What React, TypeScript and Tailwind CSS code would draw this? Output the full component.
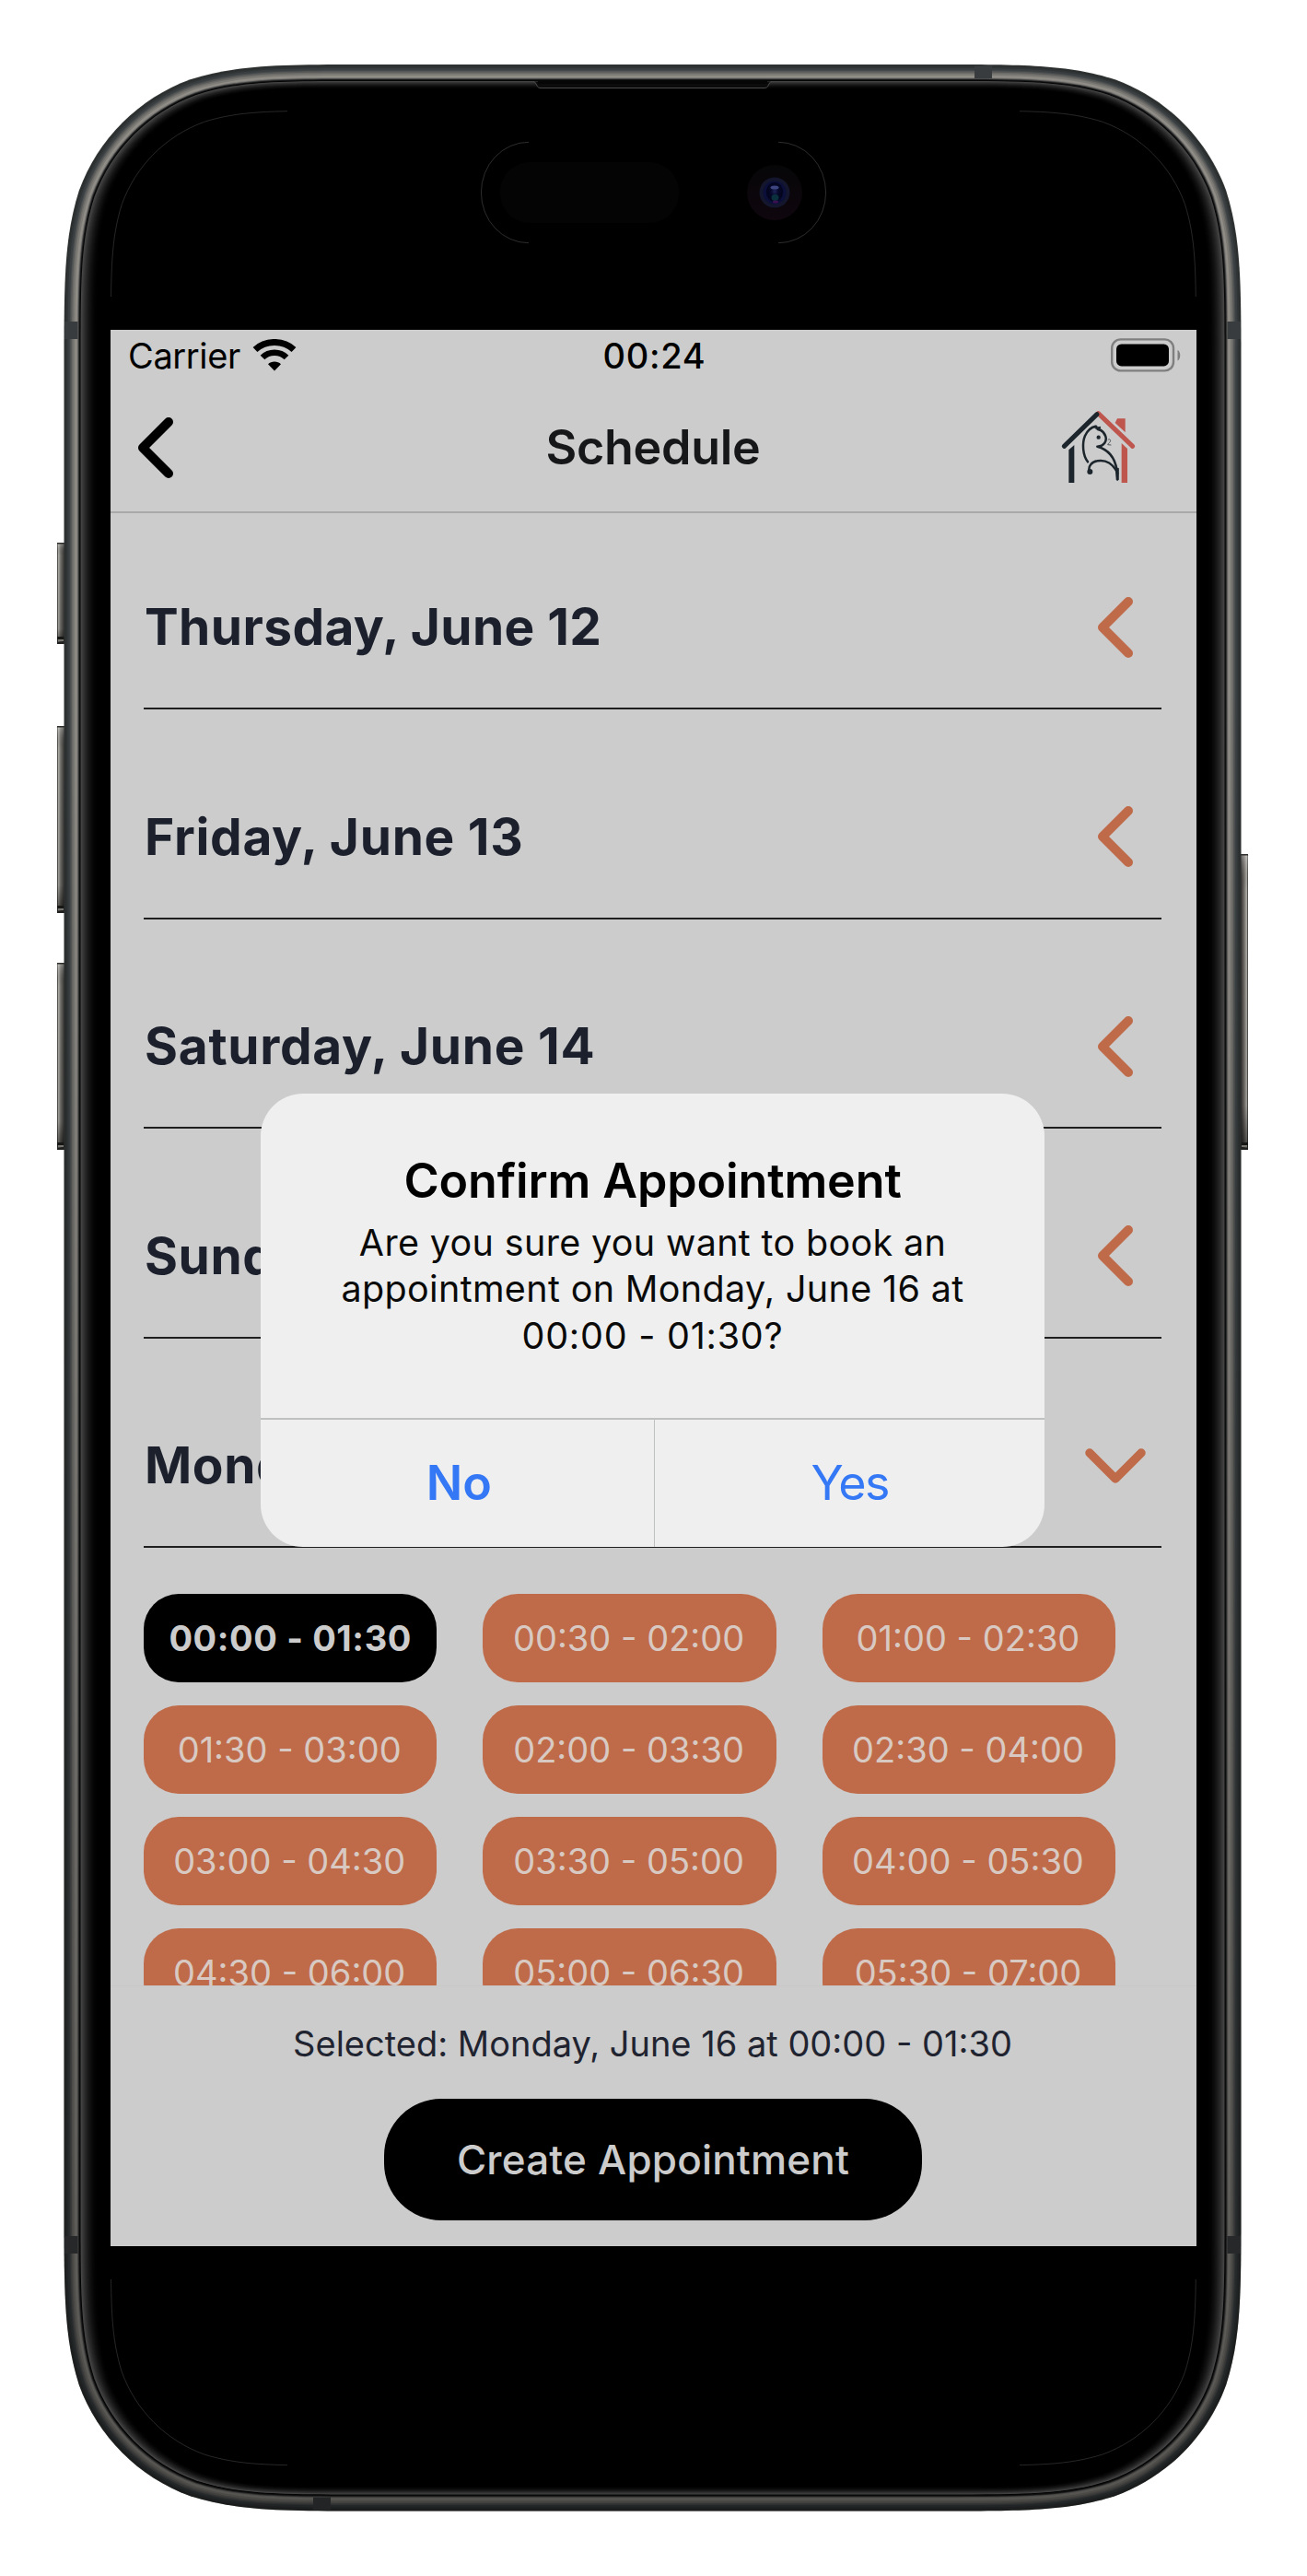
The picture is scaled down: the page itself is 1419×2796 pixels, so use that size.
import React from "react";

type Stop = [number, string];

/** Continuous-curvature rounded rectangle, as used for device outlines. */
function squircle(x: number, y: number, w: number, h: number, r: number): string {
  const k = [1.52866483, 1.08849299, 0.86840701, 0.63149399, 0.37282392, 0.16906, 0.07491176].map((n) => n * r);
  const [a, b, c, d, e, f, g] = k;
  const R = x + w;
  const B = y + h;
  return [
    `M${x + a} ${y}`,
    `L${R - a} ${y}`,
    `C${R - b} ${y} ${R - c} ${y} ${R - d} ${y + g}`,
    `C${R - e} ${y + f} ${R - f} ${y + e} ${R - g} ${y + d}`,
    `C${R} ${y + c} ${R} ${y + b} ${R} ${y + a}`,
    `L${R} ${B - a}`,
    `C${R} ${B - b} ${R} ${B - c} ${R - g} ${B - d}`,
    `C${R - f} ${B - e} ${R - e} ${B - f} ${R - d} ${B - g}`,
    `C${R - c} ${B} ${R - b} ${B} ${R - a} ${B}`,
    `L${x + a} ${B}`,
    `C${x + b} ${B} ${x + c} ${B} ${x + d} ${B - g}`,
    `C${x + e} ${B - f} ${x + f} ${B - e} ${x + g} ${B - d}`,
    `C${x} ${B - c} ${x} ${B - b} ${x} ${B - a}`,
    `L${x} ${y + a}`,
    `C${x} ${y + b} ${x} ${y + c} ${x + g} ${y + d}`,
    `C${x + f} ${y + e} ${x + e} ${y + f} ${x + d} ${y + g}`,
    `C${x + c} ${y} ${x + b} ${y} ${x + a} ${y}Z`,
  ].join(" ");
}

const OUTER = { x: 69.5, y: 70, w: 1278, h: 2655.5, r: 217 };

const METAL: Stop[] = [
  [0, "#333736"],
  [1, "#2a2d2d"],
  [2, "#303435"],
  [4, "#393e40"],
  [6, "#44484a"],
  [7, "#565857"],
  [8.5, "#6b6a67"],
  [10, "#7d7b76"],
  [12, "#908d87"],
  [14, "#7f7d79"],
  [15, "#4a4a4a"],
  [16, "#191a1b"],
  [17, "#050505"],
];

const GLOW = ["#464646", "#3f3f3f", "#393939", "#323232", "#2c2c2c", "#272727", "#222222", "#1d1d1d", "#181818", "#141414", "#101010", "#0d0d0d", "#0a0a0a", "#070707", "#050505", "#030303", "#020202", "#000000"];

function inset(dx: number, dy: number) {
  return squircle(OUTER.x + dx, OUTER.y + dy, OUTER.w - 2 * dx, OUTER.h - 2 * dy, OUTER.r - (dx + dy) / 2);
}

const LEFT_BUTTONS = [
  { y: 589, h: 110 },
  { y: 788, h: 203 },
  { y: 1045, h: 203 },
];

const BANDS = [
  { x: 70.5, y: 349, w: 14, h: 19 },
  { x: 1332.5, y: 349, w: 14.5, h: 19 },
  { x: 70.5, y: 2427, w: 14, h: 19 },
  { x: 1332.5, y: 2427, w: 14.5, h: 19 },
  { x: 1058, y: 71.5, w: 19, h: 13.5 },
  { x: 340, y: 2710.5, w: 19, h: 13.5 },
];

function SideButton({ x, y, h, flip }: { x: number; y: number; h: number; flip?: boolean }) {
  return (
    <g>
      <rect x={x} y={y} width={8} height={h} rx={1.2} fill={flip ? "url(#btnR)" : "url(#btnL)"} />
      <rect x={x} y={y} width={8} height={h} rx={1.2} fill="url(#btnV)" />
      <rect x={x} y={y} width={8} height={1.5} fill="#2c2c2a" />
      <rect x={x} y={y + h - 8} width={8} height={3} fill="#171716" />
      <rect x={x + 1} y={y + h - 5} width={6} height={2} fill="#77756f" />
      <rect x={x} y={y + h - 2} width={8} height={2} fill="#20201f" />
    </g>
  );
}

function PhoneFrame() {
  return (
    <svg className="absolute inset-0" width="1419" height="2796" viewBox="0 0 1419 2796" aria-hidden="true">
      <defs>
        <linearGradient id="btnL" x1="0" x2="1" y1="0" y2="0">
          <stop offset="0" stopColor="#2b2b29" />
          <stop offset="0.2" stopColor="#b0aea8" />
          <stop offset="0.45" stopColor="#75736e" />
          <stop offset="1" stopColor="#33322f" />
        </linearGradient>
        <linearGradient id="btnR" x1="1" x2="0" y1="0" y2="0">
          <stop offset="0" stopColor="#2b2b29" />
          <stop offset="0.2" stopColor="#b0aea8" />
          <stop offset="0.5" stopColor="#75716d" />
          <stop offset="1" stopColor="#2f2d2b" />
        </linearGradient>
        <linearGradient id="btnV" x1="0" x2="0" y1="0" y2="1">
          <stop offset="0" stopColor="#fff" stopOpacity="0.3" />
          <stop offset="0.12" stopColor="#000" stopOpacity="0" />
          <stop offset="0.85" stopColor="#000" stopOpacity="0.1" />
          <stop offset="1" stopColor="#000" stopOpacity="0.6" />
        </linearGradient>
        <linearGradient id="shade" x1="0" x2="0" y1="0" y2="1">
          <stop offset="0.25" stopColor="#000" stopOpacity="0" />
          <stop offset="0.8" stopColor="#000" stopOpacity="0.28" />
          <stop offset="1" stopColor="#000" stopOpacity="0.4" />
        </linearGradient>
        <radialGradient id="lens" cx="0.5" cy="0.42" r="0.55">
          <stop offset="0" stopColor="#1d2458" />
          <stop offset="0.4" stopColor="#060829" />
          <stop offset="0.8" stopColor="#03041c" />
          <stop offset="1" stopColor="#0c103c" />
        </radialGradient>
        <linearGradient id="lensRing" x1="0" x2="0" y1="0" y2="1">
          <stop offset="0" stopColor="#060607" />
          <stop offset="1" stopColor="#0f060e" />
        </linearGradient>
        <clipPath id="corners">
          <path d="M118 118H312V322H118Z M1107 118H1301V322H1107Z M118 2474H312V2678H118Z M1107 2474H1301V2678H1107Z" />
        </clipPath>
      </defs>

      {LEFT_BUTTONS.map((b) => (
        <SideButton key={b.y} x={62} y={b.y} h={b.h} />
      ))}
      <SideButton x={1347} y={927} h={321} flip />

      {METAL.map(([d, color]) => (
        <path key={d} d={inset(d, d)} fill={color} />
      ))}
      {BANDS.map((b) => (
        <rect key={`${b.x}-${b.y}`} x={b.x} y={b.y} width={b.w} height={b.h} fill="#393c3f" />
      ))}
      <path d={inset(0, 0)} fill="url(#shade)" />
      {GLOW.map((color, i) => (
        <path key={color} d={inset(18 + i, 18 + i * 0.5)} fill={color} />
      ))}

      <path
        d="M579 88.5 Q581 88.5 582 91 L583.5 94 Q584.5 95.5 587 95.5 L830 95.5 Q832.5 95.5 833.5 94 L835 91 Q836 88.5 838 88.5"
        fill="#0b0b0b"
        stroke="#4a4a4a"
        strokeWidth="1"
      />
      <rect x="584" y="87" width="249" height="4" fill="#060606" />

      <g fill="none" stroke="#4b4b4b" strokeWidth="0.6">
        <path d="M574 154.3 A51.6 54.7 0 0 0 574 263.7" />
        <path d="M845 154.3 A51.6 54.7 0 0 1 845 263.7" />
      </g>
      <rect x="543" y="176" width="194" height="66" rx="32" fill="#040404" />
      <circle cx="841" cy="209" r="30" fill="url(#lensRing)" />
      <circle cx="841" cy="209" r="16.5" fill="#13162c" />
      <circle cx="841" cy="209" r="12.5" fill="#0b0f3a" />
      <ellipse cx="841" cy="209.5" rx="9.5" ry="11.5" fill="url(#lens)" />
      <ellipse cx="841" cy="203.5" rx="4.5" ry="2" fill="#3d4480" />
      <ellipse cx="841.5" cy="214.5" rx="4" ry="3.5" fill="#0b303d" />
      <ellipse cx="842" cy="219" rx="3" ry="1.5" fill="#3c1050" />

      <path d={squircle(120.4, 120.4, 1178, 2555.5, 160)} fill="none" stroke="#474747" strokeWidth="0.55" clipPath="url(#corners)" />
    </svg>
  );
}

function WifiIcon() {
  return (
    <svg width="48" height="36" viewBox="0 0 48 36" fill="none" stroke="#000">
      <path d="M3 11.5 C14.5 0.8 33.5 0.8 45 11.5" strokeWidth="7" />
      <path d="M11 20 C18 13 30 13 37 20" strokeWidth="6.6" />
      <path d="M24 34.5 L17 27.2 C20.5 23.6 27.5 23.6 31 27.2 Z" fill="#000" stroke="none" />
    </svg>
  );
}

function BatteryIcon() {
  return (
    <svg width="76" height="37" viewBox="0 0 76 37">
      <rect x="1.2" y="1.4" width="66.8" height="34" rx="9.5" fill="none" stroke="#7f7f7f" strokeWidth="2.4" />
      <rect x="6" y="6.4" width="57" height="24" rx="5.5" fill="#000" />
      <path d="M72.5 13 C76.2 14.5 76.2 23 72.5 24.5 Z" fill="#7f7f7f" />
    </svg>
  );
}

function BackIcon() {
  return (
    <svg width="40" height="68" viewBox="0 0 40 68" fill="none" stroke="#000" strokeWidth="10" strokeLinecap="round" strokeLinejoin="round">
      <path d="M34 6 L6 34 L34 62" />
    </svg>
  );
}

function ChevronLeft() {
  return (
    <svg width="40" height="68" viewBox="0 0 40 68" fill="none" stroke="#bf6b49" strokeWidth="10" strokeLinecap="round" strokeLinejoin="round">
      <path d="M34 6 L6 34 L34 62" />
    </svg>
  );
}

function ChevronDown() {
  return (
    <svg width="68" height="40" viewBox="0 0 68 40" fill="none" stroke="#bf6b49" strokeWidth="9.5" strokeLinecap="round" strokeLinejoin="round">
      <path d="M6 6 L34 34 L62 6" />
    </svg>
  );
}

function HouseLogo() {
  return (
    <svg width="120" height="110" viewBox="0 0 360 330" fill="none" strokeLinecap="round" strokeLinejoin="round">
      <path d="M187 53 L299 160" stroke="#be564e" strokeWidth="15" />
      <path d="M76 160 L183 56" stroke="#1b252b" strokeWidth="15" />
      <path d="M91 172 L109 156 V279 H91 Z" fill="#1b252b" />
      <path d="M263 150 L282 168 V279 H263 Z" fill="#be564e" />
      <path d="M249 70 H275 V115 L242 84 Z" fill="#be564e" />
      <g stroke="#1b252b" strokeWidth="7.5">
        <path d="M153 211 C136 188 134 150 144 126 C152 108 164 98 178 95" />
        <path d="M194 107 C211 117 217 136 208 149 C203 156 196 160 184 161 C218 170 250 198 250 268" />
        <path d="M250 248 C237 218 212 202 184 208 C165 211 154 226 158 240" />
      </g>
      <path d="M174 96 L182 93 L184 99 L194 97 L192 104 L197 111 L184 107 Z" fill="#1b252b" stroke="#1b252b" strokeWidth="3" />
      <path d="M245 232 L253 232 L252 270 L248 270 Z" fill="#1b252b" stroke="#1b252b" strokeWidth="3" />
      <circle cx="160" cy="243" r="9" fill="#1b252b" />
      <circle cx="188" cy="131" r="6.5" fill="#1b252b" />
      <path d="M219 139 C223 134 229 139 226 145 C223 150 219 151 218 155 L228 156" stroke="#4a5257" strokeWidth="3" />
    </svg>
  );
}

const DAYS = [
  { label: "Thursday, June 12", cls: "tracking-[0.4px]", open: false },
  { label: "Friday, June 13", cls: "tracking-[0.7px]", open: false },
  { label: "Saturday, June 14", cls: "tracking-[0.72px]", open: false },
  { label: "Sunday, June 15", cls: "tracking-[0.6px]", open: false },
  { label: "Monday, June 16", cls: "tracking-[0.6px]", open: true },
];

const SLOTS = [
  "00:00 - 01:30",
  "00:30 - 02:00",
  "01:00 - 02:30",
  "01:30 - 03:00",
  "02:00 - 03:30",
  "02:30 - 04:00",
  "03:00 - 04:30",
  "03:30 - 05:00",
  "04:00 - 05:30",
  "04:30 - 06:00",
  "05:00 - 06:30",
  "05:30 - 07:00",
];

function StatusBar() {
  return (
    <div className="grid h-[56px] shrink-0 grid-cols-3 items-center pr-[17px] pl-[19px] text-[38px] leading-none text-black">
      <div className="flex items-center gap-[13px]">
        <span className="tracking-[-0.38px]">Carrier</span>
        <WifiIcon />
      </div>
      <span className="text-center font-medium tracking-[0.7px]">00:24</span>
      <div className="flex justify-end pb-[2px]">
        <BatteryIcon />
      </div>
    </div>
  );
}

function Header() {
  return (
    <header className="grid h-[143px] shrink-0 grid-cols-3 items-center border-b-[2.5px] border-[#a9a9a9] pt-[3px] pr-[49px] pl-[29px]">
      <button className="justify-self-start" aria-label="Back">
        <BackIcon />
      </button>
      <h1 className="pr-px pl-[20px] text-center text-[52px] leading-none font-semibold tracking-[-0.3px] text-[#161719]">Schedule</h1>
      <div className="justify-self-end">
        <HouseLogo />
      </div>
    </header>
  );
}

function ConfirmDialog() {
  return (
    <div role="dialog" className="absolute top-[829px] left-[163px] flex h-[491.5px] w-[851px] flex-col overflow-hidden rounded-[46px] bg-[#efefef] text-center">
      <div className="flex-1 pt-[64.5px]">
        <h2 className="text-[52px] leading-[60px] font-semibold tracking-[-0.14px] text-black">Confirm Appointment</h2>
        <p className="mt-[12.5px] text-[39.5px] leading-[50.3px] tracking-[0.34px] text-[#0a0a0a]">
          Are you sure you want to book an
          <br />
          appointment on Monday, June 16 at
          <br />
          <span className="tracking-[0.76px]">00:00 - 01:30?</span>
        </p>
      </div>
      <div className="flex h-[140px] border-t-2 border-[#bfc0c0] text-[52px] text-[#3478f6]">
        <button className="flex-1 pl-[4px] font-semibold">No</button>
        <div className="w-[1.5px] bg-[#bfc0c0]" />
        <button className="flex-1 tracking-[-1.6px]">Yes</button>
      </div>
    </div>
  );
}

export default function App() {
  return (
    <div className="relative h-[2796px] w-[1419px] overflow-hidden bg-white font-['Inter',sans-serif]">
      <PhoneFrame />
      <div className="relative mt-[358px] ml-[120px] flex h-[2080px] w-[1179px] flex-col overflow-hidden bg-[#cccccc]">
        <StatusBar />
        <Header />
        <main className="min-h-0 flex-1 overflow-hidden pt-[63px] pl-[36px]">
          <ul className="flex w-[1105px] flex-col gap-[77.6px]">
            {DAYS.map((d) => (
              <li key={d.label} className="flex h-[150px] items-center justify-between border-b-2 border-[#1f1f1f] pb-[27px]">
                <span className={`pl-px text-[55px] leading-none font-bold text-[#1b202c] ${d.cls}`}>{d.label}</span>
                <span className={d.open ? "mr-[16px]" : "mr-[30px]"}>{d.open ? <ChevronDown /> : <ChevronLeft />}</span>
              </li>
            ))}
          </ul>
          <div className="mt-[50px] grid auto-rows-[96px] grid-cols-[318.4px_318.4px_318.4px] gap-x-[50px] gap-y-[25px]">
            {SLOTS.map((s, i) => (
              <button
                key={s}
                className={
                  i === 0
                    ? "rounded-[38px] bg-black text-[38px] leading-none font-bold tracking-[0.6px] text-[#cccccc]"
                    : "rounded-[38px] bg-[#bf6b49] pr-[2px] text-[38px] leading-none text-[#d8cac3]"
                }
              >
                {s}
              </button>
            ))}
          </div>
        </main>
        <footer className="flex h-[283px] shrink-0 flex-col items-center border-t border-[#c8c8c8] pt-[43px]">
          <p className="pr-[2px] text-[38px] leading-[38px] text-[#1f2430]">Selected: Monday, June 16 at 00:00 - 01:30</p>
          <button className="mt-[41px] mr-px h-[132px] w-[584px] rounded-[62px] bg-black text-[44px] font-medium tracking-[0.18px] text-[#cccccc]">
            Create Appointment
          </button>
        </footer>
        <ConfirmDialog />
      </div>
    </div>
  );
}
